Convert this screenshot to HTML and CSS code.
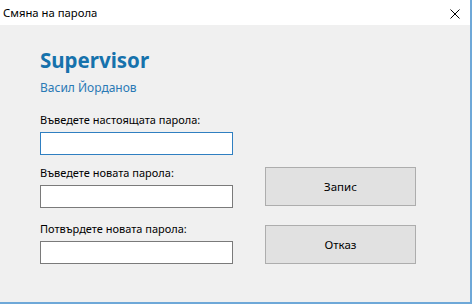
FILE: index.html
```html
<!DOCTYPE html>
<html lang="bg">
<head>
<meta charset="utf-8">
<title>Смяна на парола</title>
<link rel="stylesheet" href="styles.css">
</head>
<body>
<div class="window">
  <div class="titlebar">
    <span class="title">Смяна на парола</span>
    <svg class="close" width="10" height="10" viewBox="0 0 10 10" aria-hidden="true">
      <path d="M0.5 0.5 L9.5 9.5 M9.5 0.5 L0.5 9.5" stroke="#000" stroke-width="1" fill="none"/>
    </svg>
  </div>
  <div class="content">
    <div class="header">
      <div class="role">Supervisor</div>
      <div class="user">Васил Йорданов</div>
    </div>
    <div class="form">
      <div class="fields">
        <label class="field">
          <span class="label">Въведете настоящата парола:</span>
          <input class="input input-focus" type="password">
        </label>
        <label class="field">
          <span class="label">Въведете новата парола:</span>
          <input class="input" type="password">
        </label>
        <label class="field field-confirm">
          <span class="label">Потвърдете новата парола:</span>
          <input class="input" type="password">
        </label>
      </div>
      <div class="actions">
        <button class="btn" type="button">Запис</button>
        <button class="btn" type="button">Отказ</button>
      </div>
    </div>
  </div>
</div>
</body>
</html>
```

FILE: styles.css
```css
* { box-sizing: border-box; }

html, body {
  margin: 0;
  padding: 0;
  background: #f0f0f0;
}

body {
  font-family: "Noto Sans", "Open Sans", "DejaVu Sans", sans-serif;
  font-size: 11px;
  color: #000;
}

.window {
  width: 472px;
  height: 304px;
  background: #f0f0f0;
  border-right: 2px solid #6ea8d8;
  border-bottom: 2px solid #6ea8d8;
  display: flex;
  flex-direction: column;
}

.titlebar {
  height: 25px;
  background: #fff;
  display: flex;
  align-items: center;
  justify-content: space-between;
  padding: 0 10px 0 3px;
  flex: none;
}

.title {
  font-size: 11.3px;
  line-height: 16px;
  padding-top: 1px;
}

.close {
  display: block;
  margin-top: 2px;
}

.content {
  padding-left: 40px;
  display: flex;
  flex-direction: column;
}

.header {
  display: flex;
  flex-direction: column;
  margin-top: 23px;
}

.role {
  font-size: 20.5px;
  font-weight: 700;
  line-height: 24px;
  color: #1672ac;
}

.user {
  margin-top: 8px;
  font-size: 12px;
  line-height: 16px;
  color: #2a79b5;
}

.form {
  margin-top: 16px;
  display: flex;
  gap: 32px;
}

.fields {
  width: 193px;
  display: flex;
  flex-direction: column;
}

.field {
  display: flex;
  flex-direction: column;
}

.field + .field {
  margin-top: 10px;
}

.field-confirm.field {
  margin-top: 13px;
}

.label {
  font-size: 11px;
  line-height: 16px;
  margin-bottom: 4px;
}

.input {
  height: 23px;
  width: 193px;
  margin: 0;
  border: 1px solid #7a7a7a;
  background: #fff;
  outline: none;
  padding: 0 3px;
  font: inherit;
}

.input-focus {
  border-color: #2f7fc1;
}

.actions {
  width: 151px;
  padding-top: 55px;
  display: flex;
  flex-direction: column;
  gap: 19px;
}

.btn {
  height: 39px;
  width: 151px;
  margin: 0;
  background: #e1e1e1;
  border: 1px solid #adadad;
  border-radius: 0;
  font: inherit;
  font-size: 11.5px;
  color: #000;
  padding: 0;
}
```
